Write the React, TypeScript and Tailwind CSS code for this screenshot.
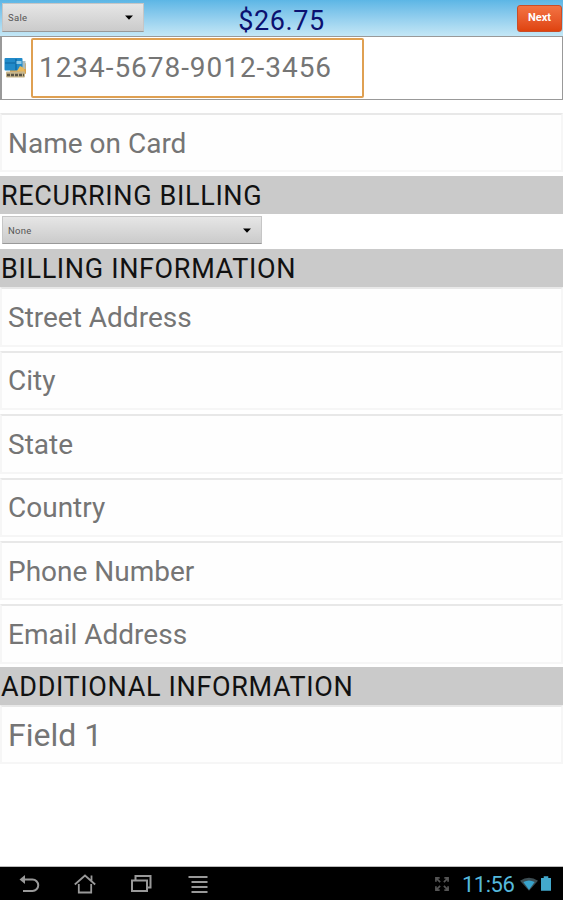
import clsx from 'clsx'

interface SpinnerProps {
  value: string
  className?: string
}

function Spinner({ value, className }: SpinnerProps) {
  return (
    <button
      className={clsx(
        'flex items-center justify-between border border-[#c6c6c6] border-b-[#999] bg-linear-to-b from-[#e6e6e6] to-[#cbcbcb] pl-[5px] text-[9.5px] text-[#555]',
        className,
      )}
    >
      <span className="pt-px tracking-[0.3px]">{value}</span>
      <svg className="h-[5px] w-2" viewBox="0 0 8 5" fill="#000">
        <path d="M0 .5h8L4 4.8z" />
      </svg>
    </button>
  )
}

function SectionTitle({ title }: { title: string }) {
  return (
    <h2 className="flex h-[38px] shrink-0 items-center bg-[#cacaca] pt-[3px] pl-px text-[27px] leading-none tracking-[0.65px] whitespace-nowrap text-[#111]">
      {title}
    </h2>
  )
}

interface FieldProps {
  label: string
  large?: boolean
}

function Field({ label, large }: FieldProps) {
  return (
    <div className="flex h-[59.4px] shrink-0 items-center border-2 border-[#f6f6f6] border-t-[#e8e8e8] bg-[#fefefe] pt-0.5 pl-1.5 text-[#757575]">
      <span className={clsx('leading-none whitespace-nowrap', large ? 'text-[32px]' : 'text-[28px]')}>{label}</span>
    </div>
  )
}

const billingFields = ['Street Address', 'City', 'State', 'Country', 'Phone Number', 'Email Address']

function CardsIcon() {
  return (
    <svg className="h-[22px] w-[23px]" viewBox="0 0 23 22">
      <rect x="6" y="6" width="16" height="11" rx="1" fill="#dba24b" />
      <rect x="17" y="4" width="4.5" height="8" fill="#a9bcc0" />
      <rect x="0.5" y="1" width="18" height="12.5" rx="1" fill="#218ac9" />
      <path d="M1 6h10M12 2v11" stroke="#0d659f" strokeWidth="1.2" />
      <rect x="12.5" y="4" width="5" height="3" fill="#8bc7e6" />
      <path d="M13 14l3-5 4 2 1 5z" fill="#e8b95d" />
      <rect x="2" y="14.5" width="19" height="6" rx="1" fill="#c7b68c" />
      <path d="M3 18h17" stroke="#5b5546" strokeWidth="2.5" strokeDasharray="3 1" />
    </svg>
  )
}

function NavBar() {
  return (
    <nav className="flex h-[33px] shrink-0 items-center bg-black text-[#999]">
      <div className="flex flex-1 items-center pl-[18px]">
        <svg className="mr-[34px] h-[22px] w-[22px]" viewBox="0 0 22 22" fill="none" stroke="currentColor" strokeWidth="2">
          <path d="M4 6.500h10.500a5.700 5.700 0 0 1 0 11.500H5" />
          <path d="M1.500 6.500 7 2v9z" fill="currentColor" stroke="none" />
        </svg>
        <svg className="mr-[34px] h-[22px] w-[22px]" viewBox="0 0 22 22" fill="none" stroke="currentColor" strokeWidth="1.8">
          <path d="M.8 11.500 11 2.500l10.200 9M17.500 8V2.500M4.800 11v8.500h12.400V11" />
        </svg>
        <svg className="mr-[36px] h-[22px] w-[22px]" viewBox="0 0 22 22" fill="none" stroke="currentColor" strokeWidth="2">
          <path d="M2 7.500h15v10.500H2z" />
          <path d="M5.500 7V3h15v11.500h-3" />
        </svg>
        <svg className="h-[22px] w-[22px]" viewBox="0 0 22 22" stroke="currentColor" strokeWidth="2">
          <path d="M.5 4h19M3.500 9h16M3.500 14h16M3.500 19h16" />
        </svg>
      </div>
      <svg className="mr-[13px] h-[14px] w-[14px]" viewBox="0 0 15 15" fill="none" stroke="#555" strokeWidth="1.8">
        <path d="M1 5V1h4M10 1h4v4M14 10v4h-4M5 14H1v-4M1.500 1.500l4 4M13.500 1.500l-4 4M13.500 13.500l-4-4M1.500 13.500l4-4" />
      </svg>
      <span className="w-[53px] pt-0.5 text-[22px] leading-none tracking-[-0.5px] whitespace-nowrap text-[#55b9dc]">11:56</span>
      <svg className="mr-[3px] ml-[5px] h-[14px] w-[18px]" viewBox="0 0 19 14">
        <path d="M0 3.500Q9.500-2.500 19 3.500L9.500 14z" fill="#3c4d53" />
        <path d="M3.500 5Q9.500 1.800 15.500 5L9.500 13z" fill="#38a3cc" />
      </svg>
      <svg className="mr-[12px] h-[15px] w-[10px]" viewBox="0 0 11 16" fill="#43a8cb">
        <path d="M3 0h5v2h3v14H0V2h3z" />
      </svg>
    </nav>
  )
}

export default function App() {
  return (
    <div className="flex h-[900px] w-[563px] flex-col overflow-hidden bg-white font-['Roboto',sans-serif]">
      <header className="relative flex h-9 shrink-0 items-start justify-between bg-linear-to-b from-[#5cb6e5] to-[#c4e7f6] pt-[3px] pr-px pl-0.5">
        <Spinner value="Sale" className="h-[29px] w-[142px] pr-[10px]" />
        <span className="absolute inset-x-0 top-2 text-center text-[27px] leading-none tracking-[0.6px] text-[#0b1171]">
          $26.75
        </span>
        <button className="mt-0.5 h-[27px] w-[45px] rounded-[3px] border border-[#c94d28] bg-linear-to-b from-[#f37342] to-[#df430d] text-[11px] font-bold text-white">
          Next
        </button>
      </header>

      <div className="flex h-16 shrink-0 items-center border border-l-2 border-[#999] pl-[2px]">
        <CardsIcon />
        <div className="ml-[4px] flex h-[60px] w-[333px] items-center rounded-[2px] border-2 border-[#dfa052] pl-[6px] text-[#757575]">
          <span className="text-[28px] leading-none tracking-[0.95px] whitespace-nowrap">1234-5678-9012-3456</span>
        </div>
      </div>

      <main className="flex flex-1 flex-col pt-[13px]">
        <Field label="Name on Card" />
        <div className="mt-1 flex flex-col">
          <SectionTitle title="RECURRING BILLING" />
        </div>
        <div className="flex h-[35px] shrink-0 pt-0.5 pl-0.5">
          <Spinner value="None" className="h-7 w-[260px] pr-[10px]" />
        </div>
        <SectionTitle title="BILLING INFORMATION" />
        <div className="flex flex-col gap-1">
          {billingFields.map(label => (
            <Field key={label} label={label} />
          ))}
        </div>
        <div className="mt-[3px] flex flex-col">
          <SectionTitle title="ADDITIONAL INFORMATION" />
        </div>
        <Field label="Field 1" large />
      </main>

      <div className="h-px shrink-0 bg-[#bbb]" />
      <NavBar />
    </div>
  )
}
